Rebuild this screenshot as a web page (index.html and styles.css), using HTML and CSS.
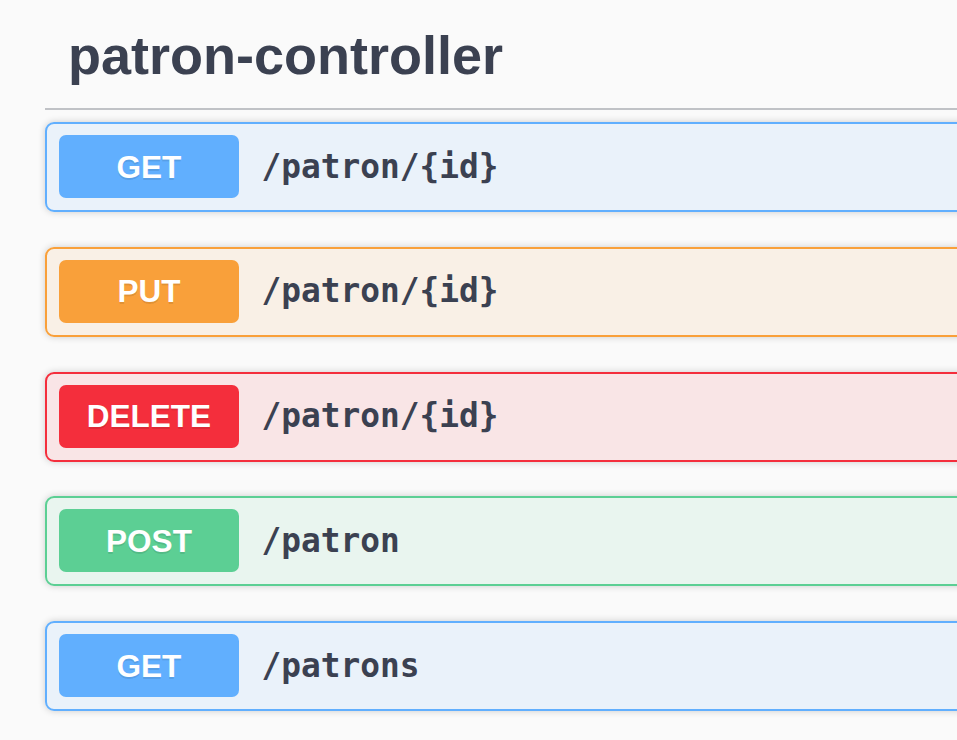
FILE: index.html
```html
<!DOCTYPE html>
<html>
<head>
<meta charset="utf-8">
<link rel="stylesheet" href="styles.css">
</head>
<body>
<div class="tag-section">
  <h3 class="tag-title">patron-controller</h3>
  <div class="op op-get">
    <div class="op-summary">
      <span class="method">GET</span>
      <span class="path">/patron/{id}</span>
    </div>
  </div>
  <div class="op op-put">
    <div class="op-summary">
      <span class="method">PUT</span>
      <span class="path">/patron/{id}</span>
    </div>
  </div>
  <div class="op op-delete">
    <div class="op-summary">
      <span class="method">DELETE</span>
      <span class="path">/patron/{id}</span>
    </div>
  </div>
  <div class="op op-post">
    <div class="op-summary">
      <span class="method">POST</span>
      <span class="path">/patron</span>
    </div>
  </div>
  <div class="op op-get">
    <div class="op-summary">
      <span class="method">GET</span>
      <span class="path">/patrons</span>
    </div>
  </div>
</div>
</body>
</html>
```

FILE: styles.css
```css
html, body {
  margin: 0;
  padding: 0;
  background: #fafafa;
  overflow: hidden;
}

.tag-section {
  margin-left: 45px;
  width: 1200px;
}

.tag-title {
  margin: 0 0 12px 0;
  padding: 23.5px 45px 22.5px 23px;
  font-family: "Liberation Sans", Arial, sans-serif;
  font-weight: 700;
  font-size: 54px;
  line-height: 62px;
  color: #3b4151;
  border-bottom: 2px solid rgba(59, 65, 81, 0.3);
}

.op {
  border: 2px solid;
  border-radius: 9px;
  margin-bottom: 34.75px;
  box-shadow: 0 0 7px rgba(0, 0, 0, 0.19);
}

.op-summary {
  display: flex;
  align-items: center;
  padding: 11px 12px 12px 12px;
}

.method {
  display: block;
  min-width: 180px;
  padding: 13.5px 0;
  line-height: 36px;
  text-align: center;
  font-family: "Liberation Sans", Arial, sans-serif;
  font-weight: 700;
  font-size: 31.5px;
  color: #fff;
  border-radius: 7px;
  text-shadow: 0 2px 0 rgba(0, 0, 0, 0.1);
}

.path {
  padding: 0 22.5px;
  font-family: "DejaVu Sans Mono", monospace;
  font-weight: 700;
  font-size: 32.8px;
  color: #3b4151;
}

.op-get { border-color: #61affe; background: rgba(97, 175, 254, 0.1); }
.op-get .method { background: #61affe; }

.op-put { border-color: #f9a03a; background: rgba(249, 160, 58, 0.1); }
.op-put .method { background: #f9a03a; }

.op-delete { border-color: #f42e3c; background: rgba(244, 46, 60, 0.1); }
.op-delete .method { background: #f42e3c; }

.op-post { border-color: #5ccf94; background: rgba(92, 207, 148, 0.1); }
.op-post .method { background: #5ccf94; }
```
